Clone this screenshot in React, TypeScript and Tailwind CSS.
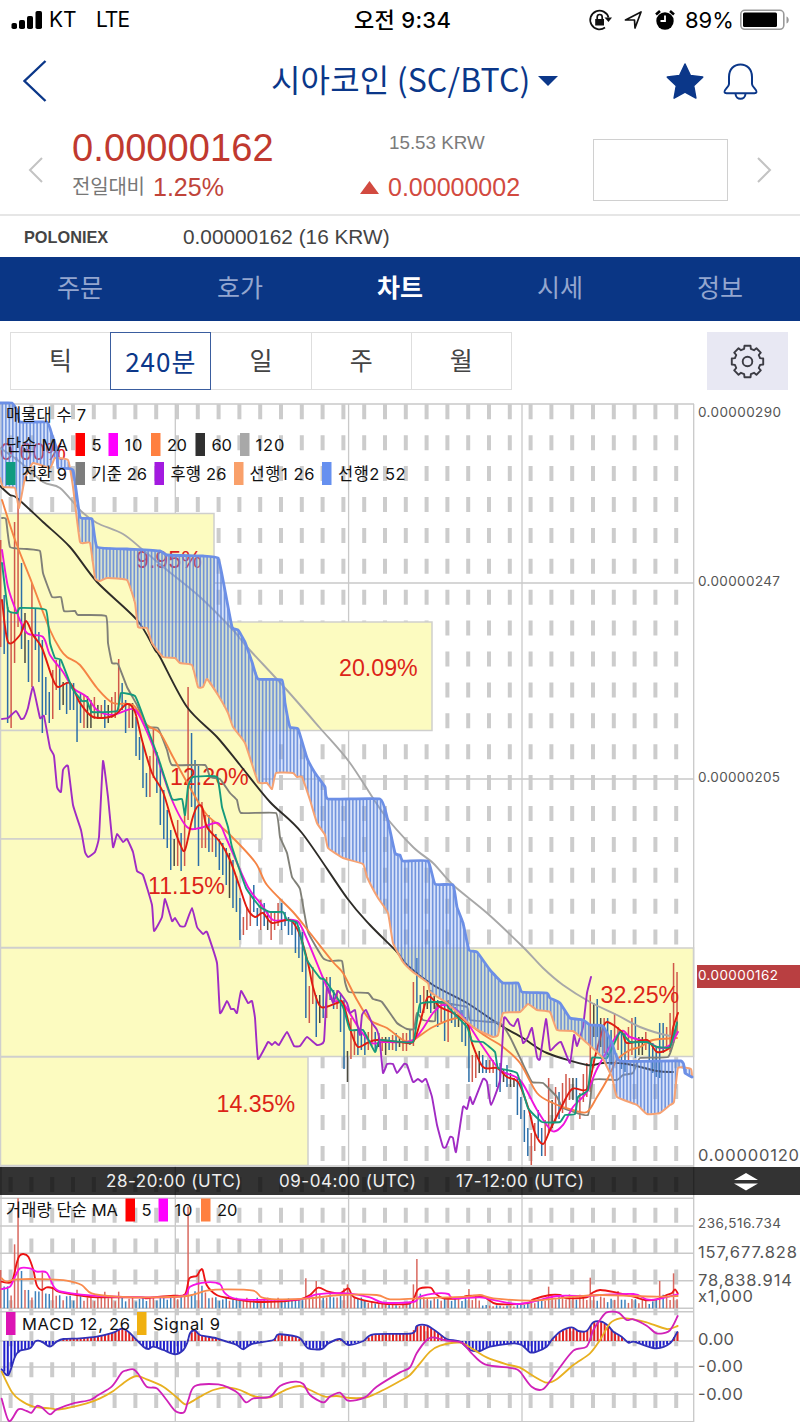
import type { ReactNode } from 'react';

type Point = [number, number];
type TextItem = { text: string; x: number; y: number; w: number; size: number };
type LegendItem = { text?: string; color?: string; x: number; w?: number };

const NAV_ITEMS = ['주문', '호가', '차트', '시세', '정보'];
const PERIODS = ['틱', '240분', '일', '주', '월'];

const STEP = 3.47;
const UI_FONT = 'Inter, "Noto Sans CJK KR", sans-serif';

const CANDLE_COLORS: Record<string, string> = {
  r: '#d0574a',
  b: '#2b6ea8',
  k: '#4a4a40',
};

// top-bottom-color, one entry per candle
const CANDLES = [
  {
    x: 0.7,
    bars: '540-647r 595-654b 607-723b 613-728r 522-663r 500-627r 563-649b 613-663k 640-682b 583-687r 608-650b 632-682b 640-733b 677-715b 692-723b 670-719r 660-690r 660-710b 682-705k 682-714b 683-710b 683-710b 697-742b 693-723b 695-728r 696-728k 700-728k 697-719r 705-719k 705-719r 700-728b 705-723k 697-718r 692-718r 659-710r 683-710b 700-733b 703-728r 703-728k 717-756b 737-760b 743-788b 773-797b 756-797r 728-778r 752-793b 763-825b 790-839b 810-848b 830-870b 839-866k 820-866r 833-871b 810-866r 687-820r 733-807b 760-830b 766-866b 802-848r 815-848r 815-852b 820-852r 834-857b 839-870b 843-875b 848-885b',
  },
  {
    x: 229.5,
    bars: '853-898k 860-908b 876-912b 898-940b 917-935r 907-930r 895-926r 885-912b 908-926b 900-930r 903-926b 912-930k 912-940r 913-930r 903-926r 903-930b 912-926b 917-935b 922-935b 922-953b 927-958b 932-972b 957-1018b 986-1023r 967-1004r 995-1037b 995-1023k 977-1018b 977-1018r 977-1000b 990-1009b 990-1009r 995-1032b 1000-1069b 1051-1082k 1018-1059r 1030-1055r 1030-1055b 1032-1050b 1032-1055b 1032-1050r 1023-1046r 1032-1050b 1033-1047k 1037-1051r 1037-1055k 1037-1050b 1035-1050r 1033-1051b 1037-1047k 1033-1051r 1033-1051r 1030-1045b 982-1046r 958-1003b 995-1013b 986-1013r 990-1009k 990-1013b 996-1009k 1000-1027b 1003-1022r 1002-1041b 1000-1042r 1003-1023b 1007-1027b 1013-1027k 1010-1042b 1017-1046b 1023-1082b',
  },
  {
    x: 472.3,
    bars: '1055-1082r 1055-1078r 1051-1073k 1055-1073b 1060-1073b 1060-1073r 1060-1073r 1065-1087b 1063-1092b 1070-1082k 1065-1087b 1073-1087k 1078-1087k 1078-1115b 1097-1119b 1110-1142b 1128-1156b 1133-1165r 1123-1151r 1110-1138b 1128-1156b 1120-1156r 1078-1133r 1100-1128k 1087-1123r 1092-1119b 1083-1113r 1074-1110r 1078-1100r 1078-1100k 1078-1110b 1093-1119r 1074-1102r 1063-1097r 995-1092r 1003-1037k 999-1037b 1018-1047k 1018-1053r 1018-1055b 1030-1065b 1013-1040r 1027-1050r 1032-1069b 1033-1072b 1027-1060r 1018-1055r 1017-1058b 1037-1055k 1037-1055k 1032-1050r 1040-1060b 1043-1073b 1047-1077b 1023-1078b 1023-1053b 1027-1050r 1013-1052r 963-1043r 972-1033r',
  },
];

const CLOUD_TOP =
  '0,403 12,403 17,410 20,422 47,422 52,435 57,450 58,468 73,470 80,517 92,519 97,547 127,549 160,551 167,555 203,556 218,558 223,580 232,627 238,630 245,642 252,662 258,679 282,680 285,703 290,727 298,729 307,758 315,773 325,787 328,799 380,799 387,817 395,853 400,855 403,861 428,861 435,884 453,885 457,907 463,923 469,950 477,952 490,970 503,983 518,983 522,992 547,993 550,998 560,1003 570,1018 583,1020 590,1025 603,1026 612,1043 620,1061 681,1061 685,1073 692,1077';
const CLOUD_BOTTOM =
  '0,478 3,487 15,488 19,508 25,478 33,463 50,468 55,458 68,460 73,487 80,542 90,543 95,578 100,581 107,578 127,580 135,603 138,627 147,628 152,643 163,657 175,658 180,663 192,665 198,687 203,687 207,679 218,695 228,713 233,727 245,743 258,782 267,783 272,789 276,773 293,773 297,777 302,777 310,800 317,823 325,835 328,848 343,858 363,864 367,877 378,898 388,913 393,943 403,962 413,972 428,983 430,992 447,1003 467,1022 478,1030 493,1037 498,1035 503,1013 520,1012 528,1004 537,1010 550,1012 557,1030 573,1031 587,1043 602,1057 607,1067 612,1077 617,1097 637,1105 647,1114 660,1113 670,1105 674,1102 678,1068 691,1069 692,1077';

const LINES = [
  // 120
  {
    color: '#a8a8a8',
    smooth: true,
    points:
      '0,448 20,462 43,482 60,488 82,512 97,523 123,534 143,550 167,570 200,597 233,630 247,647 285,688 320,728 350,763 383,813 413,847 433,863 453,885 487,913 523,947 543,968 563,985 590,1002 617,1015 640,1027 670,1036 677,1034',
  },
  // 60
  {
    color: '#2e2c28',
    smooth: true,
    points:
      '0,486 10,495 17,498 43,522 70,547 97,582 137,620 155,650 160,657 187,707 217,737 240,765 270,802 302,833 347,898 370,925 397,952 407,965 433,985 467,1003 500,1025 523,1038 547,1053 587,1065 603,1063 627,1064 657,1071 673,1072',
  },
  // 기준
  {
    color: '#808078',
    points:
      '2,518 6,519 10,547 27,549 40,551 43,573 52,597 61,597 64,611 75,611 78,615 106,616 108,643 112,663 118,664 127,687 137,705 147,727 158,728 167,750 172,765 205,765 210,777 220,779 230,793 237,800 241,813 276,813 280,837 287,853 292,877 300,889 308,932 323,958 330,961 342,961 345,982 349,992 368,993 373,999 382,1002 397,1023 407,1029 414,1029 417,1013 423,1020 435,1021 437,1003 467,1007 470,1020 500,1023 510,1037 522,1062 532,1082 543,1083 557,1097 563,1108 588,1115 593,1080 617,1080 623,1075 633,1073 640,1058 668,1057 675,1037 677,1022',
  },
  // 20
  {
    color: '#f58445',
    smooth: true,
    points:
      '2,500 15,540 32,583 50,630 60,649 67,657 80,665 97,688 113,703 133,705 147,725 160,733 173,757 193,793 207,815 227,832 255,862 267,885 293,912 310,933 333,962 343,973 357,1000 370,1020 387,1028 403,1040 413,1040 433,1027 457,1018 467,1023 487,1037 503,1047 520,1063 537,1093 553,1103 573,1110 587,1112 597,1097 607,1080 617,1060 630,1050 640,1047 653,1040 677,1038',
  },
  // 10
  {
    color: '#ee14dc',
    smooth: true,
    points:
      '2,550 8,587 17,613 27,633 43,637 50,655 63,672 73,688 87,697 97,710 113,715 133,709 143,723 157,757 172,800 187,827 200,828 218,823 227,840 248,887 262,905 273,920 293,920 302,928 323,978 333,1000 343,1003 360,1030 372,1043 383,1042 413,1040 433,1013 443,1005 457,1010 467,1022 483,1047 500,1070 520,1080 537,1110 552,1131 563,1125 573,1107 587,1092 598,1067 620,1032 630,1037 647,1042 660,1048 670,1045 678,1032',
  },
  // 5
  {
    color: '#e01a10',
    smooth: true,
    points:
      '2,600 8,642 20,635 26,621 33,635 42,648 52,677 58,687 70,683 80,703 93,717 113,716 127,704 135,712 142,740 152,773 163,792 173,825 180,844 185,850 192,820 197,807 202,807 207,827 220,842 230,860 239,885 247,908 255,917 263,913 272,923 290,920 300,935 308,963 313,987 321,1007 337,1003 343,1003 352,1035 358,1047 367,1043 377,1040 400,1042 413,1042 420,1023 428,997 440,1007 453,1013 467,1023 472,1043 483,1067 497,1068 507,1077 518,1082 528,1107 535,1133 543,1144 550,1130 560,1110 572,1089 587,1089 595,1057 602,1032 607,1022 622,1032 627,1043 647,1040 657,1052 670,1047 673,1028 678,1013',
  },
  // 전환
  {
    color: '#159a7c',
    points:
      '2,563 8,610 17,613 20,608 46,610 50,643 55,658 61,660 72,688 82,701 87,701 92,712 117,711 121,693 135,696 142,713 147,727 158,757 172,799 182,799 185,815 188,787 193,777 217,777 222,807 228,827 232,847 246,888 260,907 270,912 283,912 287,920 297,923 307,960 320,978 325,980 343,1007 350,1030 363,1030 375,1052 380,1040 413,1042 420,1004 447,1002 448,1007 467,1027 472,1041 483,1042 495,1052 498,1068 517,1073 528,1108 542,1122 560,1122 565,1115 575,1114 578,1097 588,1090 592,1058 607,1058 620,1032 630,1042 647,1042 657,1047 670,1047 677,1023',
  },
  // 후행
  {
    color: '#a02bc4',
    points:
      '2,719 8,718 16,711 21,719 24,718 28,708 33,687 40,718 44,716 50,748 54,756 57,787 61,792 63,770 68,766 73,805 81,830 85,852 88,857 95,852 99,837 103,761 108,797 113,847 117,834 123,842 127,839 133,852 137,871 143,875 152,905 154,931 162,917 165,899 172,921 175,918 180,926 185,926 192,908 197,927 203,934 207,932 217,963 220,1013 227,1001 231,1009 234,1009 237,1013 241,991 248,1003 252,1001 255,1018 258,1059 268,1042 272,1045 275,1042 279,1045 287,1032 294,1046 300,1046 307,1037 317,1045 324,1041 327,987 333,1003 338,991 347,1003 350,1013 355,1010 357,1023 360,1035 362,1015 366,1010 372,1023 377,1030 380,1043 383,1073 387,1064 393,1064 397,1073 404,1064 407,1065 413,1082 418,1079 422,1082 426,1079 432,1097 437,1125 443,1147 446,1147 450,1137 453,1138 456,1152 463,1107 467,1109 470,1097 473,1104 483,1079 487,1082 491,1105 500,1080 504,1018 510,1024 514,1026 518,1019 523,1043 528,1037 532,1028 537,1057 540,1059 546,1019 550,1050 555,1046 561,1042 570,1063 574,1035 577,1046 583,1027 587,993 591,977',
  },
];

const PROFILE = [
  { y: 513.5, w: 213.5 },
  { y: 622, w: 431.5 },
  { y: 730.5, w: 261.5 },
  { y: 839, w: 239.5 },
  { y: 948, w: 693 },
  { y: 1057, w: 307.5 },
];

const PERCENTS_UNDER = [
  { text: '0.60%', x: 0, y: 460 },
  { text: '9.95%', x: 136, y: 567.5 },
];
const PERCENTS = [
  { text: '20.09%', x: 339, y: 676 },
  { text: '12.20%', x: 170, y: 785 },
  { text: '11.15%', x: 148, y: 894 },
  { text: '32.25%', x: 600.5, y: 1003 },
  { text: '14.35%', x: 216.5, y: 1112 },
];

const PRICE_LABELS: TextItem[] = [
  { text: '0.00000290', x: 698, y: 417, w: 83, size: 13.5 },
  { text: '0.00000247', x: 698, y: 586, w: 82, size: 13.5 },
  { text: '0.00000205', x: 698, y: 782, w: 82, size: 13.5 },
  { text: '0.00000120', x: 698, y: 1161, w: 101, size: 16.5 },
];

const LEGEND: { y: number; items: LegendItem[] }[] = [
  { y: 415, items: [{ text: '매물대 수 7', x: 6, w: 80 }] },
  {
    y: 444.5,
    items: [
      { text: '단순 MA', x: 6, w: 62 },
      { color: '#ff0000', x: 75.5 },
      { text: '5', x: 91.5, w: 9.5 },
      { color: '#ff00ff', x: 108.5 },
      { text: '10', x: 124.5, w: 18 },
      { color: '#ff8040', x: 151 },
      { text: '20', x: 167, w: 20 },
      { color: '#303030', x: 195.5 },
      { text: '60', x: 211.5, w: 20.5 },
      { color: '#a8a8a8', x: 240 },
      { text: '120', x: 255.5, w: 29 },
    ],
  },
  {
    y: 473.5,
    items: [
      { color: '#0f9b80', x: 6 },
      { text: '전환 9', x: 22, w: 45 },
      { color: '#7d7d7d', x: 75.5 },
      { text: '기준 26', x: 91.5, w: 55.5 },
      { color: '#a31ae0', x: 154.5 },
      { text: '후행 26', x: 170.5, w: 56 },
      { color: '#f9a06a', x: 234 },
      { text: '선행1 26', x: 249.5, w: 65 },
      { color: '#6690ef', x: 322 },
      { text: '선행2 52', x: 338, w: 67.5 },
    ],
  },
];

const GRID_X = [1, 175.3, 348.6, 522, 693.7];
const DASH_X = Array.from({ length: 33 }, (_, i) => 10.6 + i * 20.8);

const CANDLE_LIST = CANDLES.flatMap(({ x, bars }) =>
  bars.split(' ').map((bar, i) => {
    const [top, rest] = bar.split('-');
    return {
      x: x + i * STEP,
      top: Number(top),
      bottom: parseInt(rest, 10),
      kind: rest.slice(-1),
    };
  })
);

// Lower panels use a grid three times finer than the page
const VOLUME_MA = [
  {
    color: '#ec1414',
    points:
      '5,365 35,365 50,310 58,288 70,282 85,290 100,330 110,375 125,390 140,382 160,385 175,395 230,405 290,412 420,412 440,415 480,410 520,407 555,403 568,355 590,348 600,332 608,330 620,375 650,405 690,415 760,425 830,425 900,418 930,405 955,383 985,395 1020,400 1045,385 1060,410 1110,425 1160,432 1230,430 1250,395 1260,385 1292,383 1305,400 1330,415 1380,415 1400,408 1450,410 1490,432 1580,430 1600,418 1650,405 1680,405 1700,415 1760,412 1775,400 1800,390 1850,398 1900,410 1935,420 1970,418 2000,405 2015,400 2025,388 2033,400',
  },
  {
    color: '#f714e6',
    points:
      '5,387 30,380 45,350 60,325 90,325 110,335 140,338 165,385 200,398 300,408 440,412 550,408 570,380 620,367 660,373 675,400 720,418 900,418 950,403 1040,400 1110,412 1150,428 1240,426 1260,410 1310,400 1345,402 1360,415 1440,412 1490,422 1550,432 1600,425 1670,408 1760,408 1800,405 1900,402 1940,418 1970,418 2033,403',
  },
  {
    color: '#f98a4c',
    points:
      '5,355 20,365 50,358 150,358 200,362 245,375 275,400 350,410 450,412 560,408 620,392 680,388 760,392 785,412 830,418 930,415 1020,405 1130,405 1170,418 1260,415 1400,410 1440,405 1480,415 1600,422 1700,412 1800,405 1900,408 1980,410 2033,408',
  },
];

const OSCILLATOR =
  '5,628 25,645 45,590 60,572 90,565 105,545 115,542 130,548 150,560 170,545 190,537 240,535 290,530 340,518 365,506 385,515 405,535 430,560 445,567 460,560 490,570 525,583 550,570 562,548 570,520 585,511 600,525 650,535 680,545 710,555 730,568 755,552 820,540 835,523 890,530 905,540 925,565 965,567 985,550 1020,537 1045,555 1090,543 1120,523 1235,520 1250,498 1280,496 1310,515 1340,537 1380,545 1410,570 1440,573 1470,560 1540,550 1565,555 1590,577 1610,575 1640,560 1655,540 1680,515 1715,502 1735,513 1760,513 1780,487 1805,485 1825,498 1840,515 1865,530 1885,548 1900,545 1925,553 1970,565 2010,550 2032,516';
const SIGNAL =
  '5,635 35,695 60,720 100,740 150,745 180,748 260,730 300,715 340,693 380,662 410,648 440,658 490,680 530,712 555,733 575,725 600,710 640,690 680,682 720,690 760,708 810,712 860,688 900,678 930,690 975,710 1010,708 1050,714 1100,712 1150,690 1200,663 1230,645 1260,610 1290,575 1320,557 1380,548 1420,568 1460,592 1520,613 1560,623 1600,648 1640,668 1670,658 1720,615 1770,580 1800,540 1830,490 1860,475 1900,478 1940,487 2000,507 2033,498';
const MACD =
  '5,716 27,783 55,748 80,753 95,758 110,738 125,742 150,763 170,748 220,730 270,720 295,705 335,680 365,638 380,631 400,628 415,642 440,680 470,685 500,720 525,752 552,757 565,720 585,678 655,673 690,685 715,700 738,727 760,715 810,710 840,678 885,665 910,672 930,705 970,727 990,710 1020,698 1045,722 1095,712 1130,680 1200,637 1230,622 1250,580 1280,540 1300,532 1340,542 1385,548 1415,580 1455,613 1540,625 1560,635 1595,680 1630,687 1670,635 1720,572 1760,560 1780,510 1800,480 1820,457 1855,458 1880,480 1900,478 1940,497 1970,520 2005,515 2020,495 2033,468';

const VOLUME_ENVELOPE: Point[] = [
  [0, 70], [30, 70], [70, 60], [110, 55], [160, 42], [300, 34], [420, 32], [550, 42],
  [600, 56], [650, 32], [830, 32], [900, 28], [920, 40], [1060, 44], [1110, 20], [1200, 10],
  [1240, 34], [1380, 32], [1430, 38], [1450, 10], [1540, 8], [1600, 22], [1660, 44],
  [1780, 42], [1850, 26], [1900, 30], [1960, 22], [1990, 44], [2020, 44], [2040, 16],
];
// candle index -> bar height
const VOLUME_SPIKES: Record<number, number> = {
  0: 115, 4: 192, 5: 330, 6: 112, 12: 108, 15: 65, 22: 56, 30: 50, 34: 50, 54: 305,
  57: 105, 58: 68, 88: 90, 91: 82, 99: 60, 100: 72, 119: 72, 120: 148, 121: 44, 135: 58,
  158: 65, 170: 92, 178: 52, 190: 82, 194: 105,
};
const BLUE_SPIKES = [6, 58, 121];

// Eight square teeth around the hub
const GEAR_POINTS = Array.from({ length: 8 }, (_, i) =>
  [
    [-15, 13],
    [-11, 16],
    [11, 16],
    [15, 13],
  ].map(([offset, r]) => {
    const angle = ((i * 45 - 90 + offset) * Math.PI) / 180;
    return `${(17.5 + r * Math.cos(angle)).toFixed(2)},${(17.5 + r * Math.sin(angle)).toFixed(2)}`;
  })
)
  .flat()
  .join(' ');

function toPoints(value: string): Point[] {
  return value.split(' ').map((pair) => pair.split(',').map(Number) as Point);
}

function valueAt(points: Point[], x: number) {
  const next = points.findIndex((point) => point[0] >= x);
  if (next < 0) return points[points.length - 1][1];
  if (next === 0) return points[0][1];
  const [x0, y0] = points[next - 1];
  const [x1, y1] = points[next];
  return y0 + ((y1 - y0) * (x - x0)) / (x1 - x0);
}

function curvePath(value: string, tension: number) {
  const p = toPoints(value);
  let d = `M${p[0][0]} ${p[0][1]}`;
  for (let i = 0; i < p.length - 1; i++) {
    const before = p[i - 1] ?? p[i];
    const from = p[i];
    const to = p[i + 1];
    const after = p[i + 2] ?? to;
    const c1 = [from[0] + (to[0] - before[0]) * tension, from[1] + (to[1] - before[1]) * tension];
    const c2 = [to[0] - (after[0] - from[0]) * tension, to[1] - (after[1] - from[1]) * tension];
    d += `C${c1[0]} ${c1[1]} ${c2[0]} ${c2[1]} ${to[0]} ${to[1]}`;
  }
  return d;
}

function Line({
  points,
  color,
  width = 1.9,
  smooth = false,
}: {
  points: string;
  color: string;
  width?: number;
  smooth?: boolean;
}) {
  return (
    <path
      d={curvePath(points, smooth ? 0.15 : 0.06)}
      fill="none"
      stroke={color}
      strokeWidth={width}
      strokeLinejoin="round"
      strokeLinecap="round"
    />
  );
}

function Legend({ y, items }: { y: number; items: LegendItem[] }) {
  return (
    <g>
      {items.map((item) =>
        item.color ? (
          <rect key={item.x} x={item.x} y={y - 11.5} width="9.5" height="23" fill={item.color} />
        ) : (
          <text
            key={item.x}
            x={item.x}
            y={y + 6.2}
            fontSize="16.5"
            fontFamily={UI_FONT}
            fill="#111"
            textLength={item.w}
          >
            {item.text}
          </text>
        )
      )}
    </g>
  );
}

function StatusBar() {
  return (
    <div className="flex h-10 items-center pl-[11px] font-['Inter','Noto_Sans_CJK_KR',sans-serif] text-[21px] text-black">
      <svg width="34" height="20" viewBox="0 0 34 20">
        <rect x="0.5" y="13" width="5.5" height="6" rx="1.8" />
        <rect x="8" y="10" width="6" height="9" rx="1.8" />
        <rect x="16" y="6" width="6" height="13" rx="1.8" />
        <rect x="24.5" y="1" width="6.5" height="18" rx="1.8" />
      </svg>
      <span className="ml-1 w-[47px]">KT</span>
      <span className="w-[258px] tracking-[-1px]">LTE</span>
      <span className="w-[234px] whitespace-nowrap text-[22px] font-medium tracking-[0.3px]">오전 9:34</span>
      <svg width="24" height="24" viewBox="0 0 24 24" fill="none" stroke="#111" strokeWidth="1.7">
        <path d="M20.5 9.500A9.300 9.300 0 1 0 17 19.500" />
        <path d="M16.500 9.500h7.500l-3.500 4.500z" fill="#111" stroke="none" />
        <rect x="7.200" y="11" width="8.800" height="6.500" fill="#111" stroke="none" />
        <path d="M9.200 11V9a2.500 2.500 0 0 1 5 0v2" />
      </svg>
      <svg className="ml-3" width="20" height="20" viewBox="0 0 20 20" fill="none" stroke="#111" strokeWidth="1.7">
        <path d="M1.500 10 17 2l-6 16-.5-8z" strokeLinejoin="round" />
      </svg>
      <svg className="ml-2.5" width="22" height="24" viewBox="0 0 22 24">
        <circle cx="11" cy="13" r="8.700" />
        <path d="M2 6.500 6 3M16 3l4 3.500" stroke="#000" strokeWidth="2.600" />
        <path d="M11 7.500V13H6.500" stroke="#fff" strokeWidth="1.800" fill="none" />
      </svg>
      <span className="ml-[9px] w-[54px] text-[22px]">89%</span>
      <svg width="52" height="24" viewBox="0 0 52 24">
        <rect x="1.800" y="2.300" width="43" height="19" rx="4" fill="#fff" stroke="#999" strokeWidth="1.600" />
        <rect x="4" y="4.500" width="34" height="14.500" rx="1.500" />
        <path d="M47.500 8.500c3 1 3 6 0 7z" fill="#999" />
      </svg>
    </div>
  );
}

function TitleBar() {
  return (
    <header className="flex h-[82px] items-center pl-[22px] text-[#0b3789]">
      <svg width="26" height="42" viewBox="0 0 26 42" fill="none" stroke="currentColor" strokeWidth="2.400">
        <path d="M23.500 1 2.500 21l21 20" />
      </svg>
      <h1 className="ml-[223px] w-[267px] whitespace-nowrap pb-1.5 font-['Noto_Sans_CJK_KR',sans-serif] text-[32px] leading-10 tracking-[0.15px]">
        시아코인 (SC/BTC)
      </h1>
      <svg width="20" height="12" viewBox="0 0 20 12" fill="currentColor">
        <path d="M0 1h20L10 11z" />
      </svg>
      <svg className="ml-[107px]" width="40" height="38" viewBox="0 0 40 38" fill="currentColor">
        <path
          d="m20 2 5.300 11.400 12.400 1.700-9 8.700 2.200 12.300L20 30l-10.900 6.100 2.200-12.300-9-8.700 12.400-1.700z"
          stroke="currentColor"
          strokeWidth="1.500"
          strokeLinejoin="round"
        />
      </svg>
      <svg className="ml-[18px]" width="36" height="38" viewBox="0 0 36 38" fill="none" stroke="currentColor" strokeWidth="2">
        <path
          d="M6 15C6 7 11 2.500 17.500 2.500S29 7 29 15v7c0 3 5 5.500 4.500 8-.3 1.200-1 1.200-2 1.200h-28c-1 0-1.700 0-2-1.200C1 27.500 6 25 6 22z"
          strokeLinejoin="round"
        />
        <path d="M12.500 31.500c0 7 10 7 10 0" />
      </svg>
    </header>
  );
}

function PriceSummary() {
  return (
    <section className="flex h-[94px] items-center border-b-2 border-[#e6e6e6] pt-1 pl-7 font-['Liberation_Sans','Noto_Sans_CJK_KR',sans-serif]">
      <svg width="16" height="26" viewBox="0 0 16 26" fill="none" stroke="#c3c3c3" strokeWidth="2">
        <path d="M14 1 2 13l12 12" />
      </svg>
      <div className="ml-7 w-[288px] pb-3">
        <p className="text-[38px] leading-[46px] tracking-[0.1px] text-[#c0392f]">0.00000162</p>
        <p className="flex items-center leading-8">
          <span className="w-[81px] whitespace-nowrap text-[20px] tracking-[-0.2px] text-[#777]">전일대비</span>
          <span className="text-[25px] text-[#c0443a]">1.25%</span>
        </p>
      </div>
      <div className="w-[233px] pb-3">
        <p className="pl-[29px] text-[18.8px] leading-9 text-[#7b7b7b]">15.53 KRW</p>
        <p className="flex items-center pt-2.5 leading-8 text-[#d24a40]">
          <svg width="20" height="14" viewBox="0 0 20 14" fill="currentColor">
            <path d="M9.500 1 19 14H0z" />
          </svg>
          <span className="ml-2 text-[25px]">0.00000002</span>
        </p>
      </div>
      <div className="h-[62px] w-[135px] border border-[#d0d0d0]" />
      <svg className="ml-7" width="16" height="26" viewBox="0 0 16 26" fill="none" stroke="#c3c3c3" strokeWidth="2">
        <path d="m2 1 12 12L2 25" />
      </svg>
    </section>
  );
}

function NavBar() {
  return (
    <nav className="grid h-16 grid-cols-5 bg-[#0a3685] pb-[5px] font-['Noto_Sans_CJK_KR',sans-serif] text-[25px] text-[#94a6cf]">
      {NAV_ITEMS.map((item) => (
        <div
          key={item}
          className={`flex items-center justify-center ${item === '차트' ? 'font-bold text-white' : ''}`}
        >
          {item}
        </div>
      ))}
    </nav>
  );
}

function PeriodTabs() {
  return (
    <div className="flex h-[79px] items-start justify-between pt-[11px] pr-3 pl-2.5 font-['Noto_Sans_CJK_KR',sans-serif] text-[25px] text-[#444]">
      <div className="flex">
        {PERIODS.map((item) => (
          <div
            key={item}
            className={`-mr-px flex h-[58px] w-[101.2px] items-center justify-center border pb-0.5 ${
              item === '240분'
                ? 'z-10 border-[#3a5d9f] text-[26px] tracking-[1px] text-[#0b3789]'
                : 'border-[#dedede]'
            }`}
          >
            {item}
          </div>
        ))}
      </div>
      <div className="flex h-[58px] w-[81px] items-center justify-center bg-[#e8e8f3]">
        <svg width="35" height="35" viewBox="0 0 35 35" fill="none" stroke="#3c3c44" strokeWidth="1.9" strokeLinejoin="round">
          <polygon points={GEAR_POINTS} />
          <circle cx="17.5" cy="17.5" r="4.8" />
        </svg>
      </div>
    </div>
  );
}

function PriceChart() {
  const top = toPoints(CLOUD_TOP);
  const bottom = toPoints(CLOUD_BOTTOM);

  return (
    <svg className="block" width="800" height="767" viewBox="0 400 800 767">
      {DASH_X.map((x) => (
        <path key={x} d={`M${x} 404.3V1167`} stroke="#ccc" strokeWidth="4" strokeDasharray="15 15.9" />
      ))}
      <path d="M0 404h694M0 583h694M0 779h694M0 1166h694" stroke="#c9c9c9" strokeWidth="1.5" />
      {GRID_X.map((x) => (
        <path key={x} d={`M${x} 404V1167`} stroke="#c9c9c9" strokeWidth="1.3" />
      ))}
      {PROFILE.map((row) => (
        <rect key={row.y} x="0.5" y={row.y} width={row.w} height="108.5" fill="#fcfbc0" stroke="#cfcfcd" strokeWidth="1.5" />
      ))}
      {PERCENTS_UNDER.map((item) => (
        <text key={item.text} x={item.x} y={item.y} fontSize="23.2" fontFamily="Liberation Sans, sans-serif" fill="#dc1e24">
          {item.text}
        </text>
      ))}
      {CANDLE_LIST.map((bar) => (
        <path key={bar.x} d={`M${bar.x} ${bar.top}V${bar.bottom}`} stroke={CANDLE_COLORS[bar.kind]} strokeWidth="1.5" />
      ))}
      {PERCENTS.map((item) => (
        <text key={item.text} x={item.x} y={item.y} fontSize="23.2" fontFamily="Liberation Sans, sans-serif" fill="#dc2418">
          {item.text}
        </text>
      ))}
      {LINES.map((line) => (
        <Line key={line.color} points={line.points} color={line.color} smooth={line.smooth} />
      ))}
      <polygon
        points={`${CLOUD_TOP} ${CLOUD_BOTTOM.split(' ').reverse().join(' ')}`}
        fill="#7ea2ee"
        fillOpacity="0.3"
      />
      {Array.from({ length: 199 }, (_, i) => {
        const x = 2.4 + i * STEP;
        return (
          <path
            key={i}
            d={`M${x} ${valueAt(top, x)}V${valueAt(bottom, x)}`}
            stroke="#5f86d8"
            strokeWidth="1.6"
            strokeOpacity="0.85"
          />
        );
      })}
      <Line points={CLOUD_BOTTOM} color="#f6a273" width={2} />
      <Line points={CLOUD_TOP} color="#6c8fe6" width={2.8} />
      {LEGEND.map((row) => (
        <Legend key={row.y} y={row.y} items={row.items} />
      ))}
      {PRICE_LABELS.map((label) => (
        <text
          key={label.y}
          x={label.x}
          y={label.y}
          fontSize={label.size}
          fontFamily={UI_FONT}
          fill="#555"
          textLength={label.w}
        >
          {label.text}
        </text>
      ))}
      <rect x="697" y="965" width="103" height="23" fill="#b93f41" />
      <text x="698" y="980" fontSize="13.5" fontFamily={UI_FONT} fill="#fff" textLength="80">
        0.00000162
      </text>
    </svg>
  );
}

function TimeLabel({ children }: { children: ReactNode }) {
  return <span className="whitespace-nowrap">{children}</span>;
}

function TimeAxis() {
  return (
    <div className="relative flex h-7 items-center bg-[#333] font-['Inter',sans-serif] text-[17px] tracking-[0.55px] text-[#eee]">
      <svg className="absolute inset-0" width="800" height="28" viewBox="0 1167 800 28">
        {DASH_X.map((x) => (
          <path key={x} d={`M${x} 1177v15`} stroke="#292929" strokeWidth="4" />
        ))}
        {GRID_X.map((x) => (
          <path key={x} d={`M${x} 1167v28`} stroke="#262626" strokeWidth="1.3" />
        ))}
      </svg>
      <div className="relative flex w-full items-center pt-0.5 pl-[106px]">
        <div className="w-[173px]"><TimeLabel>28-20:00 (UTC)</TimeLabel></div>
        <div className="w-[177px]"><TimeLabel>09-04:00 (UTC)</TimeLabel></div>
        <div className="w-[277px]"><TimeLabel>17-12:00 (UTC)</TimeLabel></div>
        <svg width="26" height="18" viewBox="0 0 26 18" fill="#fff">
          <path d="M13 0 25 7H1zM1 10.500h24L13 17.500z" />
        </svg>
      </div>
    </div>
  );
}

function IndicatorPanels() {
  const oscillator = toPoints(OSCILLATOR);

  return (
    <svg className="block" width="800" height="227" viewBox="0 105 2400 681">
      {DASH_X.map((x) => (
        <path key={x} d={`M${x * 3} 143V786`} stroke="#ccc" strokeWidth="12" strokeDasharray="45 47.7" />
      ))}
      <path
        d="M0 115h2081M0 198h2081M0 280h2081M0 362h2081M0 445h2081M0 455h2081M0 543h2081M0 621h2081M0 703h2081M0 785h2081"
        stroke="#c9c9c9"
        strokeWidth="4.5"
      />
      {GRID_X.map((x) => (
        <path key={x} d={`M${x * 3} 105V786`} stroke="#c9c9c9" strokeWidth="4" />
      ))}
      {CANDLE_LIST.map((bar, i) => {
        const wobble = 0.55 + 0.45 * Math.abs(Math.sin(i * 2.1));
        const spike = VOLUME_SPIKES[i];
        const height = spike ?? valueAt(VOLUME_ENVELOPE, bar.x * 3) * wobble;
        const blue = spike ? BLUE_SPIKES.includes(i) : bar.kind === 'b';
        return (
          <path
            key={i}
            d={`M${bar.x * 3} 445v${-height}`}
            stroke={blue ? '#3d82bd' : '#d9685f'}
            strokeWidth="4.5"
          />
        );
      })}
      {VOLUME_MA.map((line) => (
        <Line key={line.color} points={line.points} color={line.color} width={5.5} smooth />
      ))}
      {Array.from({ length: 195 }, (_, i) => {
        const x = 13 + i * STEP * 3;
        const y = valueAt(oscillator, x);
        return <path key={i} d={`M${x} 543V${y}`} stroke={y < 543 ? '#e32222' : '#2020cc'} strokeWidth="6" />;
      })}
      <Line points={OSCILLATOR} color="#3030b8" width={5.5} smooth />
      <Line points={SIGNAL} color="#e8b020" width={5.5} smooth />
      <Line points={MACD} color="#d022b8" width={5.5} smooth />
      <g transform="translate(0 -3480) scale(3)">
        <Legend
          y={1210}
          items={[
            { text: '거래량 단순 MA', x: 6, w: 112 },
            { color: '#ff0000', x: 125.5 },
            { text: '5', x: 141.5, w: 9.5 },
            { color: '#ff00ff', x: 158.5 },
            { text: '10', x: 174.5, w: 18 },
            { color: '#ff8040', x: 201 },
            { text: '20', x: 217, w: 20.5 },
          ]}
        />
        <Legend
          y={1323.5}
          items={[
            { color: '#dc14b4', x: 6 },
            { text: 'MACD 12, 26', x: 22, w: 108 },
            { color: '#f0b010', x: 137 },
            { text: 'Signal 9', x: 153, w: 67 },
          ]}
        />
        <g fill="#555" fontFamily={UI_FONT} fontSize="16.5">
          <text x="698" y="1227.5" fontSize="13.5" textLength="83">236,516.734</text>
          <text x="698" y="1258" textLength="99">157,677.828</text>
          <text x="698" y="1285.5" textLength="94">78,838.914</text>
          <text x="698" y="1302" textLength="55">x1,000</text>
          <text x="698" y="1344.5" textLength="36">0.00</text>
          <text x="698" y="1372" textLength="45">-0.00</text>
          <text x="698" y="1400" textLength="45">-0.00</text>
        </g>
      </g>
    </svg>
  );
}

export default function App() {
  return (
    <main className="w-[800px] overflow-hidden bg-white">
      <StatusBar />
      <TitleBar />
      <PriceSummary />
      <div className="flex h-[41px] items-center pl-6 font-['Liberation_Sans',sans-serif] text-[#444]">
        <span className="w-[159px] pt-0.5 text-[16.3px] font-bold">POLONIEX</span>
        <span className="text-[20.8px]">0.00000162 (16 KRW)</span>
      </div>
      <NavBar />
      <PeriodTabs />
      <PriceChart />
      <TimeAxis />
      <IndicatorPanels />
    </main>
  );
}
